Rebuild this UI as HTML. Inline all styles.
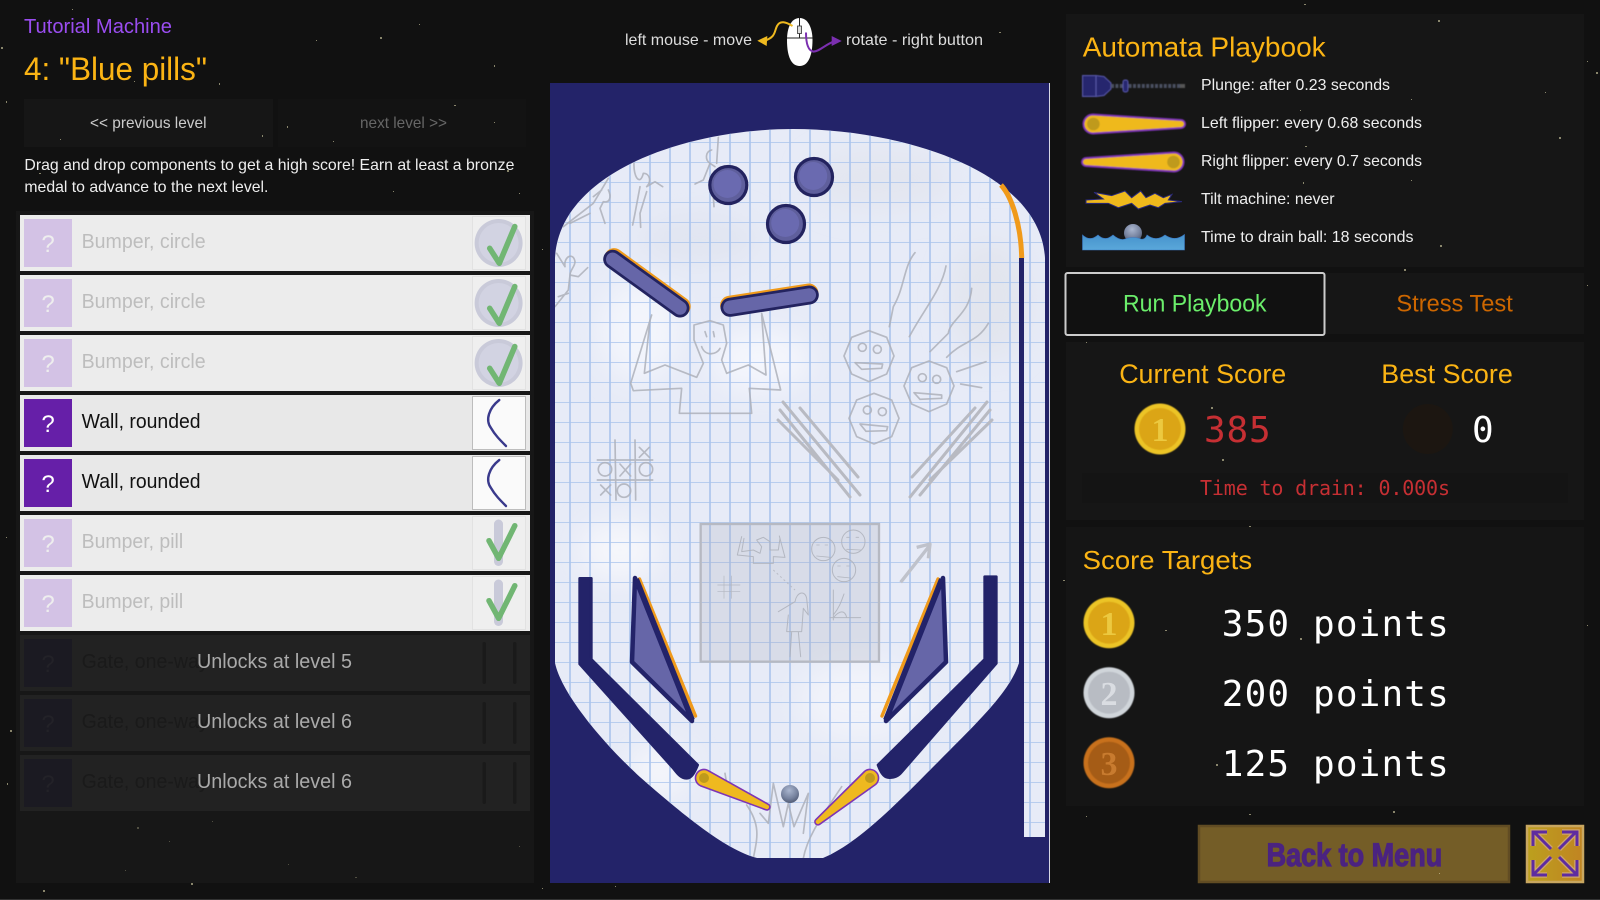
<!DOCTYPE html>
<html><head><meta charset="utf-8"><style>
html,body{margin:0;padding:0;background:#111;width:1600px;height:900px;overflow:hidden}
svg{display:block}
text{font-family:"Liberation Sans",sans-serif}
.m{font-family:"DejaVu Sans Mono","Liberation Mono",monospace}
.s{font-family:"Liberation Serif",serif;font-weight:bold}
.sk{fill:none;stroke:#adb0ba;stroke-width:5;stroke-linejoin:round;stroke-linecap:round;opacity:.85}
</style></head><body>
<svg width="1600" height="900" viewBox="0 0 1600 900" xmlns="http://www.w3.org/2000/svg">
<defs>
<pattern id="grid" patternUnits="userSpaceOnUse" x="0" y="2" width="20" height="20">
<path d="M10 0V20" stroke="#a9c3ec" stroke-width="1.6" fill="none"/><path d="M0 0H20" stroke="#a9c3ec" stroke-width="1.6" fill="none"/>
</pattern>
<clipPath id="paper"><path id="pp" d="M555,258 C560,170 690,129 793,129 C900,129 1040,170 1045,258 L1045,837 L1024,837 L1024,663 L1019,663 C1010,690 985,715 940,760 C905,795 860,843 823,858 L757,858 C725,850 680,812 640,777 C605,745 562,695 555,663 Z"/></clipPath>
<filter id="bl" x="-50%" y="-50%" width="200%" height="200%"><feGaussianBlur stdDeviation="14"/></filter>
<filter id="b1" x="-20%" y="-20%" width="140%" height="140%"><feGaussianBlur stdDeviation=".5"/></filter>
<radialGradient id="ball" cx=".45" cy=".3" r=".75"><stop offset="0" stop-color="#aab6cf"/><stop offset=".6" stop-color="#77839f"/><stop offset="1" stop-color="#4c5670"/></radialGradient>
<linearGradient id="water" x1="0" y1="0" x2="0" y2="1"><stop offset="0" stop-color="#4692cc"/><stop offset="1" stop-color="#5aa8da"/></linearGradient>
<linearGradient id="fs" x1="0" y1="0" x2="1" y2="0"><stop offset="0" stop-color="#bca01e"/><stop offset="1" stop-color="#c08422"/></linearGradient>
</defs>

<rect width="1600" height="900" fill="#111"/>

<!-- panels -->
<rect x="16" y="211" width="518" height="672" fill="#171717"/>
<rect x="24" y="99" width="249" height="48" fill="#161616"/>
<rect x="278" y="99" width="248" height="48" fill="#131313"/>
<rect x="1066" y="14" width="518" height="253" fill="#161616"/>
<rect x="1066" y="273" width="518" height="61" fill="#161616"/>
<rect x="1066" y="342" width="518" height="178" fill="#161616"/>
<rect x="1082" y="473" width="486" height="30" fill="#141414"/>
<rect x="1066" y="527" width="518" height="279" fill="#151515"/>

<!-- header -->
<text x="24" y="33" font-size="20" fill="#9a4df0" textLength="148" lengthAdjust="spacingAndGlyphs">Tutorial Machine</text>
<text x="24" y="80" font-size="32" fill="#fbb414" textLength="183" lengthAdjust="spacingAndGlyphs">4: "Blue pills"</text>
<text x="90" y="128" font-size="16" fill="#ccc" textLength="116.5" lengthAdjust="spacingAndGlyphs">&lt;&lt; previous level</text>
<text x="360" y="128" font-size="16" fill="#666" textLength="87" lengthAdjust="spacingAndGlyphs">next level &gt;&gt;</text>
<text x="24.4" y="170" font-size="16" fill="#eee" textLength="490" lengthAdjust="spacingAndGlyphs">Drag and drop components to get a high score! Earn at least a bronze</text>
<text x="24.4" y="192" font-size="16" fill="#eee" textLength="244" lengthAdjust="spacingAndGlyphs">medal to advance to the next level.</text>

<!-- list: used items -->
<g>
<rect x="20" y="215" width="510" height="56" fill="#ececec"/><rect x="24" y="219" width="48" height="48" fill="#d3c2e5"/><text x="48" y="252" font-size="24" fill="#eee" text-anchor="middle">?</text>
<text x="81.6" y="248" font-size="20" fill="#bdbdbd" textLength="124" lengthAdjust="spacingAndGlyphs">Bumper, circle</text>
<rect x="472.5" y="216.5" width="53" height="53" fill="#efefef" stroke="#e2e2e2"/><circle cx="498.6" cy="243" r="24" fill="#c9cad9"/><circle cx="498.6" cy="243" r="20" fill="#d2d3e2"/>
<path d="M489.7,248.3 L499.3,263.3 L514.8,226.5" fill="none" stroke="#71b673" stroke-width="5.5" stroke-linecap="round" stroke-linejoin="round"/>

<rect x="20" y="275" width="510" height="56" fill="#ececec"/><rect x="24" y="279" width="48" height="48" fill="#d3c2e5"/><text x="48" y="312" font-size="24" fill="#eee" text-anchor="middle">?</text>
<text x="81.6" y="308" font-size="20" fill="#bdbdbd" textLength="124" lengthAdjust="spacingAndGlyphs">Bumper, circle</text>
<rect x="472.5" y="276.5" width="53" height="53" fill="#efefef" stroke="#e2e2e2"/><circle cx="498.6" cy="303" r="24" fill="#c9cad9"/><circle cx="498.6" cy="303" r="20" fill="#d2d3e2"/>
<path d="M489.7,308.3 L499.3,323.3 L514.8,286.5" fill="none" stroke="#71b673" stroke-width="5.5" stroke-linecap="round" stroke-linejoin="round"/>

<rect x="20" y="335" width="510" height="56" fill="#ececec"/><rect x="24" y="339" width="48" height="48" fill="#d3c2e5"/><text x="48" y="372" font-size="24" fill="#eee" text-anchor="middle">?</text>
<text x="81.6" y="368" font-size="20" fill="#bdbdbd" textLength="124" lengthAdjust="spacingAndGlyphs">Bumper, circle</text>
<rect x="472.5" y="336.5" width="53" height="53" fill="#efefef" stroke="#e2e2e2"/><circle cx="498.6" cy="363" r="24" fill="#c9cad9"/><circle cx="498.6" cy="363" r="20" fill="#d2d3e2"/>
<path d="M489.7,368.3 L499.3,383.3 L514.8,346.5" fill="none" stroke="#71b673" stroke-width="5.5" stroke-linecap="round" stroke-linejoin="round"/>
</g>
<!-- active items -->
<g>
<rect x="20" y="395" width="510" height="56" fill="#e8e8e8"/><rect x="24" y="399" width="48" height="48" fill="#661fa8"/><text x="48" y="432" font-size="24" fill="#fff" text-anchor="middle">?</text>
<text x="81.6" y="428" font-size="20" fill="#111" textLength="119" lengthAdjust="spacingAndGlyphs">Wall, rounded</text>
<rect x="472.5" y="396.5" width="53" height="53" fill="#fafafa" stroke="#bdbdbd"/>
<path d="M499.3,400 C489,408 485,420 491,428 C495,435 500,440 506,446" fill="none" stroke="#3a3a8c" stroke-width="2.4" stroke-linecap="round"/>

<rect x="20" y="455" width="510" height="56" fill="#e8e8e8"/><rect x="24" y="459" width="48" height="48" fill="#661fa8"/><text x="48" y="492" font-size="24" fill="#fff" text-anchor="middle">?</text>
<text x="81.6" y="488" font-size="20" fill="#111" textLength="119" lengthAdjust="spacingAndGlyphs">Wall, rounded</text>
<rect x="472.5" y="456.5" width="53" height="53" fill="#fafafa" stroke="#bdbdbd"/>
<path d="M499.3,460 C489,468 485,480 491,488 C495,495 500,500 506,506" fill="none" stroke="#3a3a8c" stroke-width="2.4" stroke-linecap="round"/>
</g>
<g>
<rect x="20" y="515" width="510" height="56" fill="#ececec"/><rect x="24" y="519" width="48" height="48" fill="#d3c2e5"/><text x="48" y="552" font-size="24" fill="#eee" text-anchor="middle">?</text>
<text x="81.6" y="548" font-size="20" fill="#bdbdbd" textLength="101.6" lengthAdjust="spacingAndGlyphs">Bumper, pill</text>
<rect x="472.5" y="516.5" width="53" height="53" fill="#efefef" stroke="#e2e2e2"/><rect x="494" y="519.5" width="9" height="46.5" rx="4.5" fill="#c9cad9"/>
<path d="M489,540.7 L498.6,558.3 L514.8,525.7" fill="none" stroke="#71b673" stroke-width="5.5" stroke-linecap="round" stroke-linejoin="round"/>

<rect x="20" y="575" width="510" height="56" fill="#ececec"/><rect x="24" y="579" width="48" height="48" fill="#d3c2e5"/><text x="48" y="612" font-size="24" fill="#eee" text-anchor="middle">?</text>
<text x="81.6" y="608" font-size="20" fill="#bdbdbd" textLength="101.6" lengthAdjust="spacingAndGlyphs">Bumper, pill</text>
<rect x="472.5" y="576.5" width="53" height="53" fill="#efefef" stroke="#e2e2e2"/><rect x="494" y="579.5" width="9" height="46.5" rx="4.5" fill="#c9cad9"/>
<path d="M489,600.7 L498.6,618.3 L514.8,585.7" fill="none" stroke="#71b673" stroke-width="5.5" stroke-linecap="round" stroke-linejoin="round"/>
</g>
<!-- locked -->
<g>
<rect x="20" y="635" width="510" height="56" fill="#222"/><rect x="24" y="639" width="48" height="48" fill="#1b1a22"/><text x="48" y="672" font-size="24" fill="#232228" text-anchor="middle">?</text>
<text x="81.6" y="668" font-size="20" fill="#1a1a1a" textLength="127" lengthAdjust="spacingAndGlyphs">Gate, one-way</text>
<rect x="482.5" y="642" width="3.5" height="42" rx="1.7" fill="#1a1a1a"/><rect x="513" y="642" width="3.5" height="42" rx="1.7" fill="#1a1a1a"/>
<text x="197" y="668" font-size="20" fill="#aaa" textLength="155" lengthAdjust="spacingAndGlyphs">Unlocks at level 5</text>

<rect x="20" y="695" width="510" height="56" fill="#222"/><rect x="24" y="699" width="48" height="48" fill="#1b1a22"/><text x="48" y="732" font-size="24" fill="#232228" text-anchor="middle">?</text>
<text x="81.6" y="728" font-size="20" fill="#1a1a1a" textLength="127" lengthAdjust="spacingAndGlyphs">Gate, one-way</text>
<rect x="482.5" y="702" width="3.5" height="42" rx="1.7" fill="#1a1a1a"/><rect x="513" y="702" width="3.5" height="42" rx="1.7" fill="#1a1a1a"/>
<text x="197" y="728" font-size="20" fill="#aaa" textLength="155" lengthAdjust="spacingAndGlyphs">Unlocks at level 6</text>

<rect x="20" y="755" width="510" height="56" fill="#222"/><rect x="24" y="759" width="48" height="48" fill="#1b1a22"/><text x="48" y="792" font-size="24" fill="#232228" text-anchor="middle">?</text>
<text x="81.6" y="788" font-size="20" fill="#1a1a1a" textLength="127" lengthAdjust="spacingAndGlyphs">Gate, one-way</text>
<rect x="482.5" y="762" width="3.5" height="42" rx="1.7" fill="#1a1a1a"/><rect x="513" y="762" width="3.5" height="42" rx="1.7" fill="#1a1a1a"/>
<text x="197" y="788" font-size="20" fill="#aaa" textLength="155" lengthAdjust="spacingAndGlyphs">Unlocks at level 6</text>
</g>

<!-- mouse hint -->
<text x="625" y="45" font-size="16" fill="#ddd" textLength="127" lengthAdjust="spacingAndGlyphs">left mouse - move</text>
<text x="846" y="45" font-size="16" fill="#ddd" textLength="137" lengthAdjust="spacingAndGlyphs">rotate - right button</text>
<path d="M799.7,18 C791,18 787,28 787,40 C787,56 791,66 799.7,66 C808,66 812.5,56 812.5,40 C812.5,28 808,18 799.7,18Z" fill="#fff"/>
<path d="M787,38 H812.5 M799.5,18 V38" stroke="#222" stroke-width="1" fill="none"/>
<rect x="797.5" y="26" width="4" height="7.5" fill="#ddd" stroke="#333" stroke-width=".8"/>
<path d="M792.5,26 C786,22 780,20 777,26 C774,32 776,37 764,41" fill="none" stroke="#efb91f" stroke-width="2"/>
<path d="M757.3,40.7 L767.3,36 L766.7,46Z" fill="#efb91f"/>
<path d="M806,32.5 C806,40 807,50 813,51.5 C818,52.5 826,44 834,41.5" fill="none" stroke="#7b2fb0" stroke-width="2"/>
<path d="M841.7,41 L831.7,36 L831.7,46Z" fill="#7b2fb0"/>

<!-- playfield -->
<rect x="550" y="83" width="499" height="800" fill="#232369"/>
<rect x="1049" y="83" width="1" height="800" fill="#d8d8e4"/>
<use href="#pp" fill="#e7ebf7"/>
<g clip-path="url(#paper)">
<g filter="url(#bl)">
<ellipse cx="640" cy="330" rx="40" ry="50" fill="#f3f5fc"/>
<ellipse cx="760" cy="360" rx="50" ry="30" fill="#f4f6fd"/>
<ellipse cx="880" cy="180" rx="70" ry="30" fill="#e3e6f0"/>
<ellipse cx="990" cy="300" rx="40" ry="60" fill="#e2e5ee"/>
<ellipse cx="700" cy="240" rx="60" ry="25" fill="#e1e5f1"/>
<ellipse cx="620" cy="550" rx="40" ry="30" fill="#f5f6fb"/>
<ellipse cx="660" cy="770" rx="30" ry="25" fill="#f5f6fb"/>
<ellipse cx="860" cy="700" rx="60" ry="40" fill="#f1f3fa"/>
</g>
<rect x="540" y="120" width="520" height="740" fill="url(#grid)"/>

<!-- sketches zoom3 coords -->
<g transform="translate(540,0) scale(.33333)">
<path class="sk" d="M535,412 L530,490 M515,450 C495,455 495,480 510,490 L490,540 L465,552 M510,490 L525,500 M520,590 L522,620"/>
<path class="sk" d="M282,490 C280,530 300,560 310,520 C330,520 335,545 320,560 L345,545 L368,560 M300,560 L285,640 L278,675 M320,575 L300,640 L302,682"/>
<path class="sk" d="M205,535 L160,610 L70,680 M205,570 C215,590 210,610 190,605 L180,625 L195,670 M90,670 L150,640 M160,590 L185,570"/>
<path class="sk" d="M50,760 L75,800 C70,770 100,755 105,785 C105,800 90,810 90,825 L115,830 L143,803 M90,825 L85,870 L45,920 M85,880 L55,890"/>
<path class="sk" d="M335,945 L272,1150 L280,1172 L425,1165 L418,1240 L635,1240 L628,1165 L722,1170 L665,940 M330,960 L313,1120 L375,1095 L470,1132 L490,1090 L462,1020 L462,975 L510,962 L550,975 L560,1030 L545,1080 L560,1120 L625,1095 L678,1125 L665,945 M495,995 L500,1010 M520,995 L523,1010 M485,1040 C495,1070 530,1065 540,1045"/>
<path class="sk" d="M987,992 L1040,1012 L1062,1068 L1040,1122 L987,1145 L935,1122 L912,1068 L935,1012Z"/>
<circle class="sk" cx="967" cy="1042" r="12"/><circle class="sk" cx="1012" cy="1048" r="12"/><path class="sk" d="M945,1088 L1028,1092 L1025,1105 L965,1108Z"/>
<path class="sk" d="M1167,1083 L1220,1103 L1242,1158 L1220,1212 L1167,1235 L1115,1212 L1092,1158 L1115,1103Z"/>
<circle class="sk" cx="1147" cy="1133" r="12"/><circle class="sk" cx="1190" cy="1138" r="12"/><path class="sk" d="M1122,1178 L1205,1185 L1205,1195 L1140,1198Z"/>
<path class="sk" d="M1002,1180 L1055,1200 L1077,1255 L1055,1310 L1002,1332 L950,1310 L927,1255 L950,1200Z"/>
<circle class="sk" cx="982" cy="1230" r="12"/><circle class="sk" cx="1027" cy="1235" r="12"/><path class="sk" d="M960,1272 L1043,1280 L1040,1292 L978,1294Z"/>
<path class="sk" d="M1125,758 C1090,800 1095,860 1060,920 L1048,980 M1218,798 C1205,870 1150,930 1108,1010 M1295,865 C1290,940 1230,960 1225,1000 L1170,1055 M1345,970 C1310,1030 1270,1020 1220,1072 M1338,1085 L1250,1115 M1262,1152 L1325,1163"/>
</g>
<!-- scratch clusters -->
<path d="M783,402 L860,495 M780,410 L850,497 M778,420 L838,480 M800,408 L858,477 M987,402 L910,497 M990,410 L920,495 M975,408 L912,477 M992,420 L930,480" fill="none" stroke="#b8bac2" stroke-width="3" stroke-linecap="round"/>
<!-- zoom4 coords -->
<g transform="translate(540,450) scale(.33333)">
<path class="sk" d="M172,30 L338,30 M172,90 L338,90 M225,-30 L228,150 M285,-30 L287,150 M240,42 L272,78 M272,42 L240,78 M182,105 L212,135 M212,105 L182,135 M298,-8 L328,22 M328,-8 L298,22"/>
<circle class="sk" cx="195" cy="58" r="20"/><circle class="sk" cx="318" cy="58" r="20"/><circle class="sk" cx="252" cy="122" r="20"/>
<rect x="482" y="222" width="535" height="413" fill="#a4a8b4" fill-opacity=".22" stroke="#b6b9c2" stroke-width="7"/>
<path class="sk" style="stroke-width:3" d="M605,260 L592,315 L640,320 L640,340 L700,340 L700,320 L735,322 L718,258 M612,265 L605,305 L640,300 L660,310 L665,290 L650,270 L670,262 L690,275 L690,300 L715,300 L720,265"/>
<circle class="sk" style="stroke-width:3" cx="850" cy="297" r="35"/><circle class="sk" style="stroke-width:3" cx="940" cy="275" r="35"/><circle class="sk" style="stroke-width:3" cx="912" cy="360" r="35"/>
<path class="sk" style="stroke-width:2.5" d="M830,285 h8 M855,285 h8 M830,318 L870,322 M920,262 h8 M948,262 h8 M920,298 L962,300 M893,348 h8 M920,348 h8 M893,380 L932,384"/>
<path class="sk" style="stroke-width:2" d="M533,405 L600,405 M533,425 L600,425 M552,378 L552,445 M575,378 L575,445"/>
<path class="sk" style="stroke-width:3" d="M880,420 L880,510 M870,503 L962,503 M880,495 C900,470 905,450 912,432 M880,503 C900,480 915,480 920,503"/>
<path class="sk" style="stroke-width:3" d="M715,485 L765,455 C770,425 795,420 800,445 L805,495 L790,475 L785,545 L740,545 L745,495 M755,545 L750,620 M775,545 L782,620"/>
<path d="M700,360 L765,420" stroke="#b9bcc6" stroke-width="3" stroke-dasharray="6 8" fill="none"/>
<path d="M1082,397 L1170,285 M1130,292 L1170,282 L1165,325" fill="none" stroke="#bfc2cb" stroke-width="10" stroke-linejoin="round"/>
<path class="sk" d="M640,1225 C650,1170 665,1130 620,1065 M790,1225 C800,1170 830,1120 905,1010 M660,1090 L685,1120 L700,1000 L730,1130 L745,1060 L762,1130 L805,1030 L790,1150 M555,970 L560,1000"/>
</g>
</g>

<!-- wall + orange arc -->
<rect x="1019" y="258" width="5" height="406" fill="#232369"/>
<path d="M1001,185 C1012,197 1021,225 1021.7,258" fill="none" stroke="#f09a1a" stroke-width="5"/>

<!-- bumpers -->
<g fill="#5f5f9c" stroke="#23235f" stroke-width="3.2">
<circle cx="728.3" cy="185" r="18.5"/><circle cx="814" cy="177" r="18.5"/><circle cx="786" cy="224" r="18.5"/>
</g>
<g fill="#6a6ab0"><circle cx="727.5" cy="184" r="14"/><circle cx="813.2" cy="176" r="14"/><circle cx="785.2" cy="223" r="14"/></g>

<!-- pills -->
<g fill="none" stroke-linecap="round">
<path d="M614,257.6 L681.2,306.4" stroke="#f09a1a" stroke-width="19"/>
<path d="M612.7,259.3 L680,308" stroke="#23235f" stroke-width="19"/>
<path d="M612.7,259.3 L680,308" stroke="#6666a8" stroke-width="13.5"/>
<path d="M729.6,305.3 L808.9,293" stroke="#f09a1a" stroke-width="19"/>
<path d="M730,307.3 L809.3,295" stroke="#23235f" stroke-width="19"/>
<path d="M730,307.3 L809.3,295" stroke="#6666a8" stroke-width="13.5"/>
</g>

<!-- lower walls (zoom4 coords) -->
<g transform="translate(540,450) scale(.33333)" fill="#232369" stroke="#232369" stroke-width="8" stroke-linejoin="round">
<path d="M119,385 L119,642 L400,955 C415,975 425,985 440,985 C455,985 465,965 473,945 L154,628 L154,385Z"/>
<path d="M1334,380 L1334,628 L1014,945 C1025,975 1035,983 1048,983 C1065,983 1075,978 1085,966 L1369,640 L1369,380Z"/>
</g>

<!-- triangles -->
<path d="M639.5,579 L695.5,716" stroke="#f09a1a" stroke-width="3.4" fill="none" stroke-linecap="round"/>
<path d="M635,578 L692,721 L632,662 Z" fill="#6666a8" stroke="#232369" stroke-width="4.5" stroke-linejoin="round"/>
<path d="M636.5,579 L692.5,720" stroke="#232369" stroke-width="5"/>
<path d="M938,579 L882,716" stroke="#f09a1a" stroke-width="3.4" fill="none" stroke-linecap="round"/>
<path d="M943,578 L886,721 L946,662 Z" fill="#6666a8" stroke="#232369" stroke-width="4.5" stroke-linejoin="round"/>
<path d="M941.5,579 L885.5,720" stroke="#232369" stroke-width="5"/>

<!-- flippers -->
<path d="M707.6,770.3 L768.3,804.3 A3,3 0 0 1 765.7,809.7 L700.4,785.7 A8.5,8.5 0 1 1 707.6,770.3Z" fill="#efb91f" stroke="#7e35b5" stroke-width="1.6"/>
<circle cx="704" cy="778" r="5" fill="#bf9a1c"/>
<path d="M864.5,771.5 L815.8,819.7 A3,3 0 0 0 819.6,824.3 L875.5,784.5 A8.5,8.5 0 1 0 864.5,771.5Z" fill="#efb91f" stroke="#7e35b5" stroke-width="1.6"/>
<circle cx="870" cy="778" r="5" fill="#bf9a1c"/>
<circle cx="790" cy="794" r="9" fill="url(#ball)"/>

<!-- playbook -->
<text x="1082.7" y="56.7" font-size="28" fill="#fbb414" textLength="243" lengthAdjust="spacingAndGlyphs">Automata Playbook</text>
<text x="1201" y="90" font-size="16" fill="#eee" textLength="189" lengthAdjust="spacingAndGlyphs">Plunge: after 0.23 seconds</text>
<text x="1201" y="128" font-size="16" fill="#eee" textLength="221" lengthAdjust="spacingAndGlyphs">Left flipper: every 0.68 seconds</text>
<text x="1201" y="166" font-size="16" fill="#eee" textLength="221" lengthAdjust="spacingAndGlyphs">Right flipper: every 0.7 seconds</text>
<text x="1201" y="204" font-size="16" fill="#eee" textLength="133.6" lengthAdjust="spacingAndGlyphs">Tilt machine: never</text>
<text x="1201" y="242" font-size="16" fill="#eee" textLength="212.5" lengthAdjust="spacingAndGlyphs">Time to drain ball: 18 seconds</text>

<!-- plunger icon -->
<g filter="url(#b1)">
<path d="M1082.5,75.5 H1096 V96.5 H1082.5Z" fill="#26266e" stroke="#5656a8" stroke-width="1"/>
<path d="M1096,75.5 L1104,76.5 L1111,83 V89 L1104,95.5 L1096,96.5Z" fill="#26266e" stroke="#5656a8" stroke-width="1"/>
<path d="M1111,86 H1184" stroke="#4a4f60" stroke-width="4" stroke-dasharray="3 1.4"/>
<rect x="1180" y="84" width="5" height="4" fill="#555"/>
<rect x="1123" y="80" width="5" height="12" rx="2" fill="#26266e" stroke="#5656a8" stroke-width="1"/>
</g>
<!-- flipper icons -->
<g filter="url(#b1)">
<path d="M1093,114.5 L1181,120 A4,4 0 0 1 1181,128 L1093,133.5 A9.5,9.5 0 0 1 1093,114.5Z" fill="#efb91f" stroke="#7e35b5" stroke-width="2"/>
<circle cx="1093.4" cy="124" r="6.3" fill="#bf9a1c"/>
<path d="M1174,152.5 L1086,158 A4,4 0 0 0 1086,166 L1174,171.5 A9.5,9.5 0 0 0 1174,152.5Z" fill="#efb91f" stroke="#7e35b5" stroke-width="2"/>
<circle cx="1173.5" cy="162" r="6.3" fill="#bf9a1c"/>
</g>
<!-- tilt icon -->
<g transform="translate(1070,185) scale(.3333)" filter="url(#b1)">
<path d="M48,45 L100,42 L72,22 L125,32 L165,18 L185,38 L212,18 L228,38 L255,25 L280,38 L306,28 L295,45 L336,50 L285,55 L265,68 L240,60 L205,72 L185,55 L145,68 L115,55 L95,55 L48,55Z" fill="#efb91f" stroke="#2a2a7a" stroke-width="3"/>
</g>
<!-- drain icon -->
<circle cx="1133" cy="233" r="9" fill="url(#ball)"/>
<path d="M1082.5,235 Q1090,242 1098,235 Q1105,242 1113,235 Q1120,241 1125,239 Q1133,236 1141,239 Q1145,240 1147,235 Q1156,242 1165,235 Q1175,242 1184.5,234.5 V250 H1082.5Z" fill="url(#water)" stroke="#3a78c4" stroke-width=".6"/>

<!-- tabs -->
<rect x="1065.5" y="273" width="259" height="62" rx="2" fill="#111" stroke="#ccc" stroke-width="2"/>
<text x="1123" y="311.7" font-size="24" fill="#6bee6b" textLength="143.6" lengthAdjust="spacingAndGlyphs">Run Playbook</text>
<text x="1396.4" y="311.7" font-size="24" fill="#cc6600" textLength="116.4" lengthAdjust="spacingAndGlyphs">Stress Test</text>

<!-- score -->
<text x="1119.2" y="383" font-size="27" fill="#fbb414" textLength="167" lengthAdjust="spacingAndGlyphs">Current Score</text>
<text x="1381.3" y="383" font-size="27" fill="#fbb414" textLength="131.5" lengthAdjust="spacingAndGlyphs">Best Score</text>
<g filter="url(#b1)"><circle cx="1160" cy="429" r="25.5" fill="#ecc428"/><circle cx="1160" cy="429" r="21" fill="#dba515"/></g>
<text class="s" x="1160" y="441" font-size="34" fill="#ecc940" text-anchor="middle">1</text>
<text class="m" x="1204" y="442" font-size="36" fill="#c62f33" textLength="66.7" lengthAdjust="spacing">385</text>
<circle cx="1427.8" cy="429" r="25" fill="#1c1611"/>
<text class="m" x="1472" y="442" font-size="36" fill="#fff">0</text>
<text class="m" x="1200" y="495" font-size="20" fill="#c62f33" textLength="250" lengthAdjust="spacing">Time to drain: 0.000s</text>

<!-- targets -->
<text x="1082.7" y="569" font-size="26" fill="#fbb414" textLength="169.4" lengthAdjust="spacingAndGlyphs">Score Targets</text>
<g filter="url(#b1)"><circle cx="1109" cy="622.7" r="25.5" fill="#ecc428"/><circle cx="1109" cy="622.7" r="21" fill="#dba515"/></g>
<text class="s" x="1109" y="635" font-size="34" fill="#ecc940" text-anchor="middle">1</text>
<g filter="url(#b1)"><circle cx="1109" cy="692.7" r="25.5" fill="#d0d5da"/><circle cx="1109" cy="692.7" r="21" fill="#b8bcc3"/></g>
<text class="s" x="1109" y="705" font-size="34" fill="#dadde2" text-anchor="middle">2</text>
<g filter="url(#b1)"><circle cx="1109" cy="762.7" r="25.5" fill="#c8711e"/><circle cx="1109" cy="762.7" r="21" fill="#a55c15"/></g>
<text class="s" x="1109" y="775" font-size="34" fill="#c87b2f" text-anchor="middle">3</text>
<text class="m" x="1221.8" y="636" font-size="36" fill="#fff" textLength="227" lengthAdjust="spacing">350 points</text>
<text class="m" x="1221.8" y="706" font-size="36" fill="#fff" textLength="227" lengthAdjust="spacing">200 points</text>
<text class="m" x="1221.8" y="776" font-size="36" fill="#fff" textLength="227" lengthAdjust="spacing">125 points</text>

<!-- back + fullscreen -->
<rect x="1199" y="826" width="310" height="56" fill="#745d27" stroke="#614c23" stroke-width="2.5"/>
<text x="1266.6" y="866" font-size="32" font-weight="bold" fill="#4b2380" stroke="#4b2380" stroke-width="1.2" textLength="175.6" lengthAdjust="spacingAndGlyphs">Back to Menu</text>
<rect x="1527" y="826" width="56" height="56" fill="url(#fs)" stroke="#c9a760" stroke-width="2.5"/>
<g fill="none" stroke-linejoin="miter">
<g stroke="#cfa56a" stroke-width="5.5"><path d="M1551,849 L1534,832 M1533,846 V832 H1547 M1559,849 L1576,832 M1562,832 H1577 V846 M1551,857 L1534,874 M1533,860 V875 H1547 M1559,857 L1576,874 M1577,860 V875 H1562"/></g>
<g stroke="#5e2ca0" stroke-width="3"><path d="M1551,849 L1534,832 M1533,846 V832 H1547 M1559,849 L1576,832 M1562,832 H1577 V846 M1551,857 L1534,874 M1533,860 V875 H1547 M1559,857 L1576,874 M1577,860 V875 H1562"/></g>
</g>

<!-- stars -->
<g fill="#d8d2a8" opacity=".6">
<rect x="1" y="47" width="2" height="2"/><rect x="6" y="101" width="1" height="2"/><rect x="380" y="37" width="2" height="2"/><rect x="419" y="24" width="1" height="1"/><rect x="316" y="40" width="1" height="1"/><rect x="494" y="65" width="1" height="2"/><rect x="219" y="83" width="1" height="2"/><rect x="134" y="81" width="1" height="1"/><rect x="72" y="9" width="1" height="1"/><rect x="287" y="126" width="1" height="2"/><rect x="39" y="173" width="2" height="1"/><rect x="507" y="170" width="2" height="2"/><rect x="519" y="193" width="1" height="1"/><rect x="393" y="191" width="1" height="1"/><rect x="262" y="135" width="1" height="2"/><rect x="60" y="139" width="1" height="1"/><rect x="333" y="141" width="1" height="1"/><rect x="454" y="105" width="2" height="1"/><rect x="494" y="122" width="1" height="1"/>
<rect x="1304" y="4" width="2" height="1"/><rect x="1438" y="20" width="2" height="2"/><rect x="1596" y="72" width="2" height="2"/><rect x="1587" y="61" width="1" height="1"/><rect x="1559" y="137" width="2" height="2"/><rect x="1404" y="269" width="2" height="2"/><rect x="1545" y="92" width="1" height="1"/><rect x="1300" y="110" width="1" height="1"/><rect x="1411" y="99" width="1" height="1"/><rect x="1305" y="146" width="2" height="1"/><rect x="1303" y="182" width="1" height="2"/><rect x="1440" y="245" width="2" height="2"/><rect x="1411" y="180" width="1" height="1"/>
<rect x="1086" y="342" width="1" height="1"/><rect x="1249" y="526" width="2" height="1"/><rect x="1211" y="407" width="2" height="2"/><rect x="1222" y="459" width="2" height="2"/><rect x="1587" y="285" width="1" height="1"/><rect x="1086" y="816" width="1" height="1"/><rect x="1249" y="814" width="2" height="1"/><rect x="1393" y="811" width="2" height="2"/><rect x="1439" y="873" width="1" height="1"/><rect x="1587" y="625" width="1" height="1"/><rect x="1165" y="630" width="2" height="1"/><rect x="1300" y="638" width="2" height="2"/><rect x="1216" y="764" width="2" height="2"/><rect x="1063" y="580" width="2" height="1"/>
<rect x="10" y="730" width="2" height="2"/><rect x="7" y="783" width="1" height="2"/><rect x="43" y="890" width="2" height="2"/><rect x="191" y="883" width="2" height="2"/><rect x="137" y="827" width="2" height="2" opacity=".5"/><rect x="212" y="821" width="1" height="1" opacity=".5"/><rect x="169" y="841" width="1" height="1" opacity=".5"/><rect x="125" y="870" width="1" height="1" opacity=".5"/><rect x="288" y="864" width="1" height="1" opacity=".5"/><rect x="519" y="846" width="1" height="1" opacity=".5"/><rect x="355" y="877" width="2" height="1" opacity=".5"/>
<rect x="999" y="32" width="2" height="1"/><rect x="542" y="249" width="1" height="1"/><rect x="542" y="888" width="1" height="1"/><rect x="615" y="886" width="1" height="1"/><rect x="6" y="537" width="1" height="1"/>
</g>
<rect x="0" y="899" width="1600" height="1" fill="#333"/>
</svg>
</body></html>
